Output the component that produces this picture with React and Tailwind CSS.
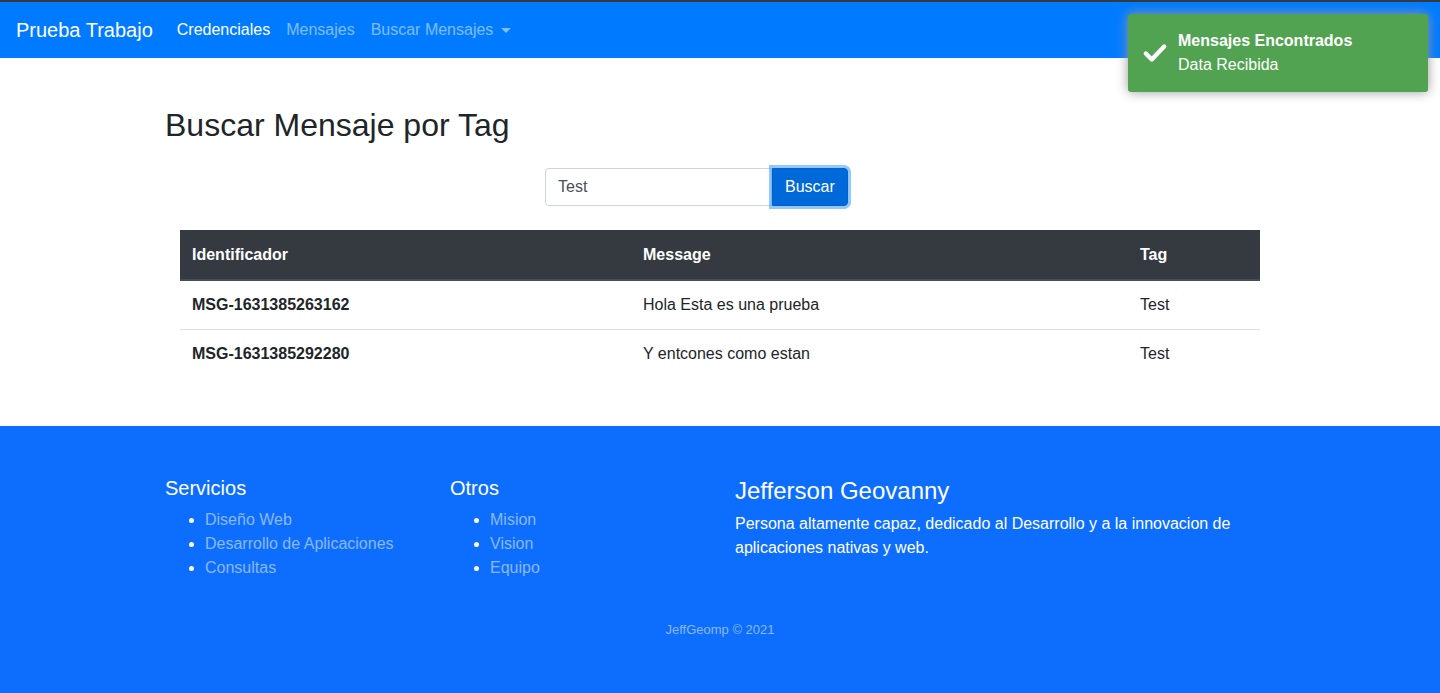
// Página de búsqueda de mensajes por tag — navbar, formulario, tabla y footer

const MENSAJES = [
  { id: 'MSG-1631385263162', message: 'Hola Esta es una prueba', tag: 'Test' },
  { id: 'MSG-1631385292280', message: 'Y entcones como estan', tag: 'Test' },
];

const FONT = { fontFamily: '"Liberation Sans", Arial, sans-serif' };

function Navbar() {
  return (
    <nav className="bg-[#007bff] border-t-2 border-[#343a40] h-[58px] flex items-center px-4">
      <span className="text-white text-[20px] mr-4">Prueba Trabajo</span>
      <ul className="flex items-center text-[16px]">
        <li className="px-2 text-white">Credenciales</li>
        <li className="px-2 text-white/50">Mensajes</li>
        <li className="px-2 text-white/50 flex items-center">
          Buscar Mensajes
          <span className="ml-[8px] mt-[1px] border-t-[5px] border-x-[5px] border-x-transparent border-t-white/50"></span>
        </li>
      </ul>
    </nav>
  );
}

function Toast() {
  return (
    <div className="absolute top-[14px] right-[12px] w-[300px] h-[78px] bg-[#51a351] rounded-[3px] shadow-[0_0_12px_#999] flex items-center pl-[14px] text-white">
      <svg width="26" height="26" viewBox="0 0 24 24" fill="none" stroke="white" strokeWidth="4" strokeLinecap="round" strokeLinejoin="round">
        <path d="M3.5 12.5l5.5 5.5 11.5-12" />
      </svg>
      <div className="ml-[10px] leading-[24px] text-[16px]">
        <div className="font-bold">Mensajes Encontrados</div>
        <div>Data Recibida</div>
      </div>
    </div>
  );
}

function Buscador() {
  return (
    <div className="flex ml-[380px] mt-[24px]">
      <div className="w-[227px] h-[38px] border border-[#ced4da] rounded-l-[4px] flex items-center px-3 text-[#495057] text-[16px] bg-white">
        Test
      </div>
      <button className="h-[38px] px-3 bg-[#0069d9] border border-[#0062cc] rounded-r-[4px] text-white text-[16px] shadow-[0_0_0_3px_rgba(38,143,255,0.5)]">
        Buscar
      </button>
    </div>
  );
}

function Tabla() {
  return (
    <table className="mx-[15px] mt-[24px] w-[1080px] text-[16px] text-[#212529] border-collapse">
      <thead>
        <tr className="bg-[#343a40] text-white h-[50px]">
          <th className="text-left font-bold px-3 w-[451px] border-b-2 border-[#454d55]">Identificador</th>
          <th className="text-left font-bold px-3 w-[497px] border-b-2 border-[#454d55]">Message</th>
          <th className="text-left font-bold px-3 border-b-2 border-[#454d55]">Tag</th>
        </tr>
      </thead>
      <tbody>
        {MENSAJES.map((m, i) => (
          <tr key={m.id} className={`h-[49px] ${i > 0 ? 'border-t border-[#dee2e6]' : ''}`}>
            <th className="text-left font-bold px-3">{m.id}</th>
            <td className="px-3">{m.message}</td>
            <td className="px-3">{m.tag}</td>
          </tr>
        ))}
      </tbody>
    </table>
  );
}

function ListaFooter({ titulo, items }) {
  return (
    <div className="w-[285px]">
      <h5 className="text-[20px] leading-[24px] text-white mb-2">{titulo}</h5>
      <ul className="list-disc pl-[40px] text-[16px] leading-[24px] marker:text-white">
        {items.map((it) => (
          <li key={it} className="text-[#8cb8ff]">{it}</li>
        ))}
      </ul>
    </div>
  );
}

function Footer() {
  return (
    <footer className="bg-[#0d6efd] pt-[50px] pb-[60px]">
      <div className="w-[1110px] mx-auto flex">
        <ListaFooter titulo="Servicios" items={['Diseño Web', 'Desarrollo de Aplicaciones', 'Consultas']} />
        <ListaFooter titulo="Otros" items={['Mision', 'Vision', 'Equipo']} />
        <div className="w-[525px] text-white">
          <h4 className="text-[24px] leading-[29px] mb-2">Jefferson Geovanny</h4>
          <p className="text-[16px] leading-[24px] -mt-[1px]">
            Persona altamente capaz, dedicado al Desarrollo y a la innovacion de aplicaciones nativas y web.
          </p>
        </div>
      </div>
      <p className="text-center text-[13px] text-[#8cb8ff] mt-[40px]">JeffGeomp © 2021</p>
    </footer>
  );
}

export default function App() {
  return (
    <div className="relative min-h-screen bg-white" style={FONT}>
      <Navbar />
      <main className="w-[1110px] mx-auto pt-[48px] pb-[48px]">
        <h2 className="text-[32px] leading-[38px] font-medium text-[#212529]">Buscar Mensaje por Tag</h2>
        <Buscador />
        <Tabla />
      </main>
      <Footer />
      <Toast />
    </div>
  );
}
